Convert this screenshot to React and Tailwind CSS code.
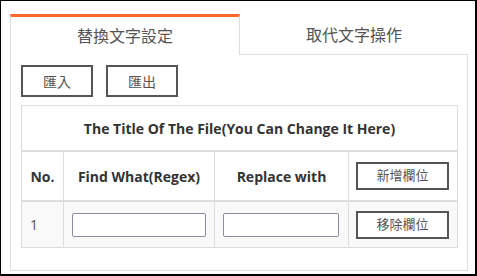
import React from 'react';

const font = { fontFamily: '"Open Sans", "Noto Sans CJK TC", sans-serif' };

const Btn = ({ children, className = '' }) => (
    <button className={`border-2 border-[#555] bg-white text-[#555] flex items-center justify-center ${className}`}>
        {children}
    </button>
);

export default function App() {
    return (
        <div
            style={font}
            className="w-[477px] h-[276px] bg-white border-l border-t border-r-2 border-b-2 border-black pt-[13px] pl-[9px]"
        >
            <div className="w-[458px] flex">
                <div className="w-[230px] h-[41px] border-t-[3px] border-t-[#fe6a2c] border-l border-r border-[#ddd] flex items-center justify-center text-[16px] text-[#555]">
                    替換文字設定
                </div>
                <div className="w-[228px] h-[41px] border-b border-[#ddd] flex items-center justify-center text-[16px] text-[#555] pt-[1px]">
                    取代文字操作
                </div>
            </div>
            <div className="w-[458px] h-[216px] border-l border-r border-b border-[#ddd] pt-[10px] pl-[10px]">
                <div className="flex gap-[13px]">
                    <Btn className="w-[72px] h-[32px] text-[14px]">匯入</Btn>
                    <Btn className="w-[72px] h-[32px] text-[14px]">匯出</Btn>
                </div>
                <div className="mt-[8px] w-[437px] border border-[#ddd] text-[#333]">
                    <div className="h-[46px] flex items-center justify-center font-bold text-[14px] border-b-2 border-[#ddd]">
                        The Title Of The File(You Can Change It Here)
                    </div>
                    <div className="h-[50px] flex border-b-2 border-[#ddd] font-bold text-[14px]">
                        <div className="w-[41px] flex items-center justify-center">No.</div>
                        <div className="w-[151px] border-l border-[#ddd] flex items-center justify-center">Find What(Regex)</div>
                        <div className="w-[134px] border-l border-[#ddd] flex items-center justify-center">Replace with</div>
                        <div className="w-[109px] border-l border-[#ddd] flex items-center pl-[7px]">
                            <Btn className="w-[93px] h-[28px] text-[13px] font-normal">新增欄位</Btn>
                        </div>
                    </div>
                    <div className="h-[45px] flex bg-[#f9f9f9] text-[14px] text-[#555]">
                        <div className="w-[41px] flex items-center pl-[8px]">1</div>
                        <div className="w-[151px] border-l border-[#ddd] flex items-center pl-[8px]">
                            <input className="w-[134px] h-[24px] bg-white border border-[#8f8a9e] rounded-[2px] outline-none" />
                        </div>
                        <div className="w-[134px] border-l border-[#ddd] flex items-center pl-[8px]">
                            <input className="w-[116px] h-[24px] bg-white border border-[#8f8a9e] rounded-[2px] outline-none" />
                        </div>
                        <div className="w-[109px] border-l border-[#ddd] flex items-center pl-[7px]">
                            <Btn className="w-[93px] h-[28px] text-[13px]">移除欄位</Btn>
                        </div>
                    </div>
                </div>
            </div>
        </div>
    );
}
